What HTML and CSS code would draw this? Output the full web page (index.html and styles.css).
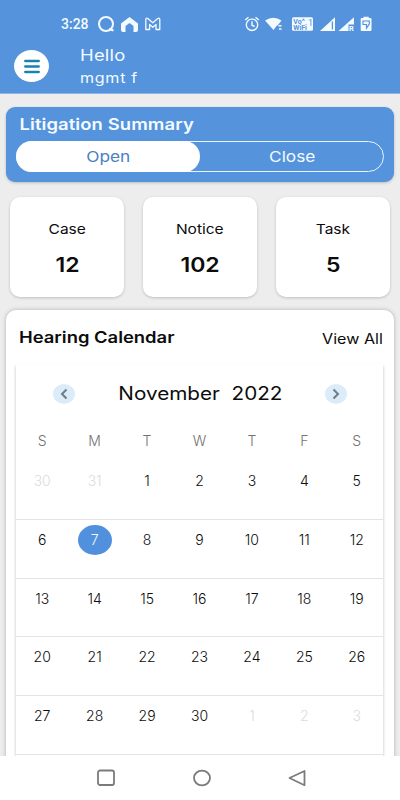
FILE: index.html
```html
<!DOCTYPE html>
<html lang="en">

<head>
    <meta charset="UTF-8">
    <meta name="viewport" content="width=device-width, initial-scale=1.0">
    <title>Litigation Summary</title>
    <link rel="stylesheet" href="styles.css">
</head>

<body>
    <header class="header">
        <div class="status-bar">
            <span class="time">3:28</span>
            <svg class="status-left" width="66" height="18" viewBox="0 0 66 18" fill="none" stroke="#f4fbff">
                <circle cx="9" cy="9" r="7" stroke-width="2" />
                <path d="M12 14l4.500 1.500" stroke-width="2" />
                <path d="M24 8.500L32.500 2 41 8.500V15q0 2-2 2h-2.500v-6L32.500 8l-4 3v6H26q-2 0-2-2z" fill="#f4fbff" stroke="none" />
                <path d="M48.800 14.500V4.500q0-2 2-1l5 4.300 5-4.300q2-1 2 1v10h-3.800V9.500l-3.200 2.800-3.200-2.800v5z" stroke-width="1.300" stroke-linejoin="round" />
            </svg>
            <svg class="status-right" width="128" height="18" viewBox="0 0 128 18" fill="#f4fbff">
                <g fill="none" stroke="#f4fbff" stroke-width="1.400">
                    <circle cx="8" cy="9.800" r="5.700" />
                    <path d="M8 6.200v4l2.600 1.300M1.200 5L4.500 2.200M14.800 5L11.500 2.200" />
                </g>
                <path d="M21 5.500q8.500-5.500 16.500 0L34 10l-1.500 1-3 4z" />
                <path d="M34.500 10h3v1.500h-3zM35 13.300h2.500v1.500h-2.500z" />
                <rect x="48" y="2.300" width="21" height="13.500" rx="1.500" />
                <path d="M76 16L91 2.200V16z" />
                <path d="M88.400 6.500v8" stroke="#5593dd" stroke-width="1.300" />
                <path d="M94.500 16L110 2.200v7.300h-5.500V16z" />
                <path d="M119.500 3V1.800h5.200V3h1.800q1 0 1 1v11q0 1-1 1h-8.800q-1 0-1-1V4q0-1 1-1z" />
                <path d="M119 6h6.300v3l-2.800 4v-3.500H119z" fill="none" stroke="#5593dd" stroke-width="1.200" />
                <text class="vo" x="49.300" y="8.500">Vo^</text>
                <text class="vo" x="49.300" y="15">WiFi</text>
                <text class="sim" x="64" y="11">1</text>
                <text class="roaming" x="105" y="16">R</text>
            </svg>
        </div>
        <div class="user-bar">
            <button class="menu">
                <svg width="16" height="15" viewBox="0 0 16 15" stroke="#1684ae" stroke-width="2.300" stroke-linecap="round">
                    <path d="M1.200 2h13.600M1.200 7.500h13.600M1.200 13h13.600" />
                </svg>
            </button>
            <div class="user">
                <span class="wide hello">Hello</span>
                <span class="wide name">mgmt f</span>
            </div>
        </div>
    </header>

    <main class="content">
        <section class="summary">
            <h2 class="wide summary-title">Litigation Summary</h2>
            <div class="switch">
                <div class="switch-item active"><span class="wide">Open</span></div>
                <div class="switch-item"><span class="wide">Close</span></div>
            </div>
        </section>

        <section class="counts">
            <div class="count">
                <span class="wide count-label">Case</span>
                <span class="wide count-value">12</span>
            </div>
            <div class="count">
                <span class="wide count-label">Notice</span>
                <span class="wide count-value">102</span>
            </div>
            <div class="count">
                <span class="wide count-label">Task</span>
                <span class="wide count-value">5</span>
            </div>
        </section>

        <section class="hearing">
            <div class="hearing-head">
                <h2 class="wide hearing-title">Hearing Calendar</h2>
                <span class="wide view-all">View All</span>
            </div>
            <div class="calendar">
                <div class="month-bar">
                    <button class="arrow">
                        <svg width="8" height="12" viewBox="0 0 8 12"><path d="M6.500 1.500L2 6l4.500 4.500" /></svg>
                    </button>
                    <span class="wide month">November&nbsp; 2022</span>
                    <button class="arrow">
                        <svg width="8" height="12" viewBox="0 0 8 12"><path d="M1.500 1.500L6 6l-4.500 4.500" /></svg>
                    </button>
                </div>
                <div class="week weekdays">
                    <span>S</span><span>M</span><span>T</span><span>W</span><span>T</span><span>F</span><span>S</span>
                </div>
                <div class="week">
                    <span class="other">30</span><span class="other">31</span><span>1</span><span>2</span><span>3</span><span>4</span><span>5</span>
                </div>
                <div class="week">
                    <span>6</span><span class="today">7</span><span>8</span><span>9</span><span>10</span><span>11</span><span>12</span>
                </div>
                <div class="week">
                    <span>13</span><span>14</span><span>15</span><span>16</span><span>17</span><span>18</span><span>19</span>
                </div>
                <div class="week">
                    <span>20</span><span>21</span><span>22</span><span>23</span><span>24</span><span>25</span><span>26</span>
                </div>
                <div class="week">
                    <span>27</span><span>28</span><span>29</span><span>30</span><span class="other">1</span><span class="other">2</span><span class="other">3</span>
                </div>
                <div class="week"></div>
            </div>
        </section>
    </main>

    <nav class="nav">
        <svg width="20" height="20" viewBox="0 0 20 20"><rect x="2" y="2.500" width="16" height="14.500" rx="2" /></svg>
        <svg width="20" height="20" viewBox="0 0 20 20"><ellipse cx="10" cy="10" rx="8" ry="7.400" /></svg>
        <svg width="20" height="20" viewBox="0 0 20 20"><path d="M17.500 3v14.200L2.500 10z" /></svg>
    </nav>
</body>

</html>
```
FILE: styles.css
```css
* {
    box-sizing: border-box;
    margin: 0;
    padding: 0;
}

body {
    width: 400px;
    height: 800px;
    display: flex;
    flex-direction: column;
    overflow: hidden;
    background-color: #ededed;
    color: #0c0c0c;
    font-family: Inter, "Open Sans", sans-serif;
}

button {
    border: none;
    display: flex;
    align-items: center;
    justify-content: center;
}

/* stretched lettering */
.wide {
    display: inline-block;
    white-space: nowrap;
    transform: scaleX(1.15);
}

.header {
    height: 94px;
    flex-shrink: 0;
    background-color: #5593dd;
    border-bottom: 1px solid #8fb5e2;
    color: #f4fbff;
}

.status-bar {
    height: 44px;
    padding: 15px 28px 0 61px;
    display: flex;
}

.time {
    width: 36px;
    font: 500 14px/19px Roboto, sans-serif;
}

.status-right {
    margin-left: auto;
}

.vo {
    font: bold 7px Roboto, sans-serif;
    fill: #5593dd;
}

.sim {
    font: 9px Roboto, sans-serif;
    fill: #5593dd;
}

.roaming {
    font: bold 7.5px Roboto, sans-serif;
}

.user-bar {
    display: flex;
    padding-left: 14px;
}

.menu {
    width: 35px;
    height: 32px;
    margin-top: 6px;
    border-radius: 50%;
    background-color: #fff;
}

.user {
    margin-left: 31px;
    display: flex;
    flex-direction: column;
    align-items: flex-start;
}

.user .wide,
.summary-title,
.hearing-title {
    transform-origin: left;
}

.hello {
    font-size: 16px;
    line-height: 22px;
    letter-spacing: 0.2px;
}

.name {
    font-size: 14px;
    line-height: 24px;
    letter-spacing: 0.6px;
}

.content {
    flex: 1;
    min-height: 0;
    padding: 13px 6px 0;
    display: flex;
    flex-direction: column;
    overflow: hidden;
}

.summary {
    height: 75px;
    flex-shrink: 0;
    padding: 6px 10px 0 10px;
    border-radius: 9px;
    background-color: #5593dd;
    color: #f4fbff;
    box-shadow: 0 1px 3px rgba(0, 0, 0, 0.2);
}

.summary-title {
    display: block;
    padding-left: 3px;
    font-size: 16px;
    line-height: 23px;
    font-weight: 600;
    letter-spacing: 0.1px;
}

.switch {
    height: 31px;
    margin-top: 5px;
    display: flex;
    border: 1px solid #e6f5ff;
    border-radius: 16px;
}

.switch-item {
    flex: 1;
    display: flex;
    align-items: center;
    justify-content: center;
    font-size: 15px;
}

.switch-item .wide {
    padding-left: 1px;
}

.active {
    margin: -1px 0 -1px -1px;
    border-radius: 16px;
    background-color: #fff;
    color: #4a7fc0;
}

.counts {
    margin-top: 15px;
    padding: 0 4px;
    display: flex;
    justify-content: space-between;
}

.count {
    width: 114px;
    height: 100px;
    padding-top: 21px;
    display: flex;
    flex-direction: column;
    align-items: center;
    border-radius: 10px;
    background-color: #fff;
    box-shadow: 0 1px 3px rgba(0, 0, 0, 0.2);
}

.count-label {
    font-size: 13.5px;
    line-height: 22px;
}

.count-value {
    margin-top: 10px;
    font-size: 20px;
    line-height: 30px;
    font-weight: 600;
}

.hearing {
    flex: 1;
    margin-top: 13px;
    padding: 0 11px 0 10px;
    border-radius: 10px 10px 0 0;
    background-color: #fff;
    box-shadow: 0 0 4px rgba(0, 0, 0, 0.25);
}

.hearing-head {
    height: 54px;
    padding-left: 3px;
    display: flex;
    align-items: center;
    justify-content: space-between;
}

.hearing-title {
    font-size: 16px;
    line-height: 22px;
    font-weight: 600;
}

.view-all {
    padding-top: 2px;
    font-size: 14px;
    transform-origin: right;
}

.calendar {
    box-shadow: 0 2px 3px rgba(0, 0, 0, 0.25);
}

.month-bar {
    height: 59px;
    padding: 0 36px 0 37px;
    display: flex;
    align-items: center;
    justify-content: space-between;
}

.month {
    font-size: 18px;
}

.arrow {
    width: 22px;
    height: 20px;
    border-radius: 50%;
    background-color: #dcebf9;
}

.arrow path {
    fill: none;
    stroke: #727b85;
    stroke-width: 2;
}

.week {
    height: 58.8px;
    padding-top: 5px;
    display: grid;
    grid-template-columns: repeat(7, 1fr);
    justify-items: center;
    align-items: start;
    border-bottom: 1px solid #e4e4e4;
    font-size: 14px;
    font-weight: 350;
}

.week span {
    width: 34px;
    line-height: 30px;
    text-align: center;
}

.weekdays {
    height: 38px;
    padding-top: 3px;
    border-bottom: none;
    color: #737373;
}

.week .other {
    color: #dcdcdc;
}

.week .today {
    border-radius: 50%;
    background-color: #5190dc;
    color: #f4fbff;
}

.nav {
    height: 44px;
    flex-shrink: 0;
    padding: 0 93px 0 96px;
    display: flex;
    align-items: center;
    justify-content: space-between;
    background-color: #fff;
    position: relative;
}

.nav svg {
    fill: none;
    stroke: #7b7b7b;
    stroke-width: 1.8;
    stroke-linejoin: round;
}
```
